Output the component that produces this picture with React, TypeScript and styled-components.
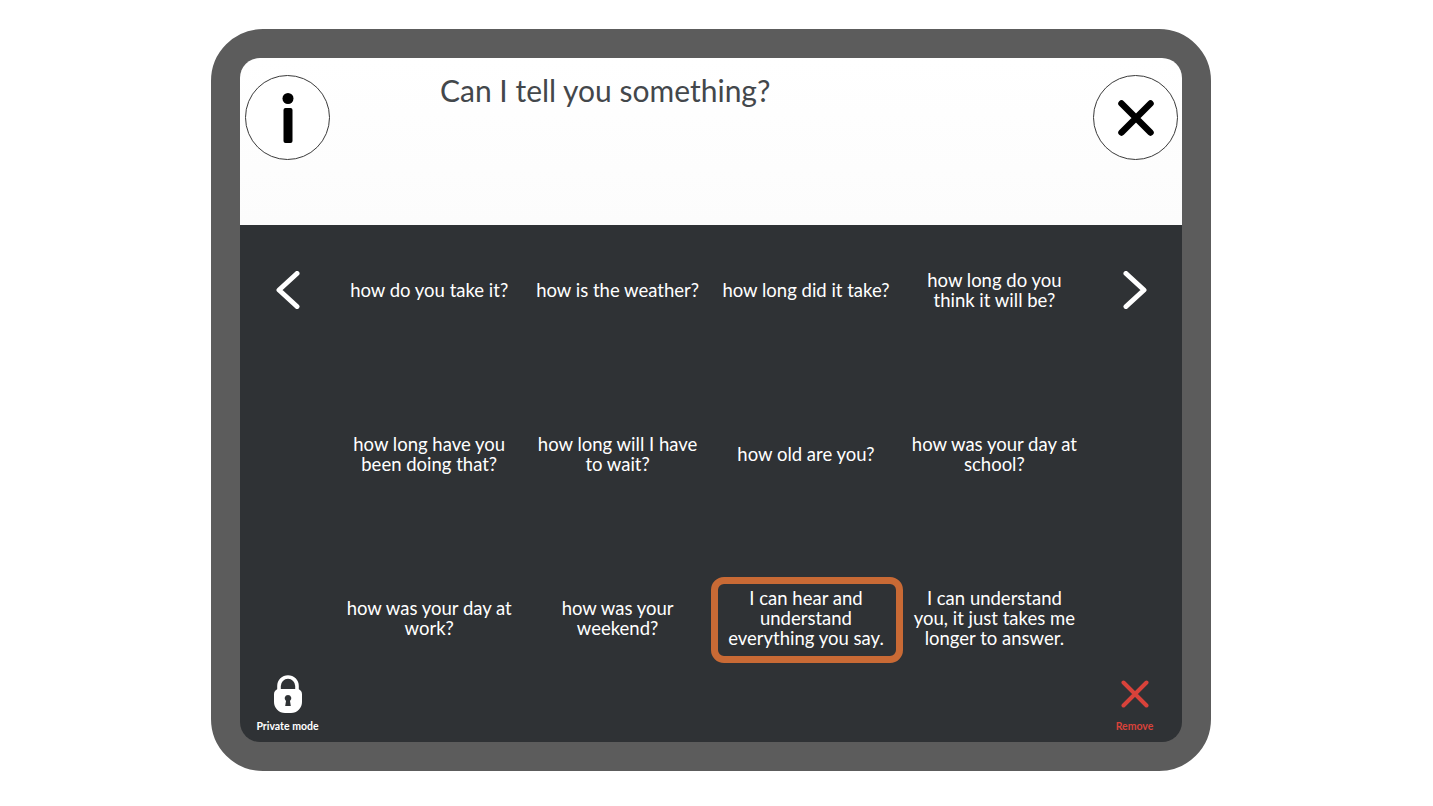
import styled, { createGlobalStyle } from 'styled-components';

const GlobalStyle = createGlobalStyle`
  html, body {
    margin: 0;
    padding: 0;
    background: #ffffff;
  }
`;

const Page = styled.div`
  width: 1433px;
  height: 806px;
  padding-top: 29px;
  padding-left: 211px;
  box-sizing: border-box;
  font-family: Lato, 'Noto Sans', sans-serif;
`;

const Frame = styled.div`
  width: 1000px;
  height: 742px;
  box-sizing: border-box;
  border: 29px solid #5c5c5c;
  border-radius: 52px;
  background: #5c5c5c;
`;

const Screen = styled.div`
  height: 100%;
  border-radius: 20px;
  overflow: hidden;
  display: flex;
  flex-direction: column;
`;

const Header = styled.header`
  height: 167px;
  box-sizing: border-box;
  padding: 17px 4px 0 5px;
  display: flex;
  align-items: flex-start;
  background: linear-gradient(#ffffff, #fcfcfc);
`;

const Title = styled.h1`
  flex: 1;
  margin: 0 0 0 110px;
  font-size: 30px;
  font-weight: 400;
  line-height: 30px;
  color: #43474b;
`;

const RoundButton = styled.button`
  width: 85px;
  height: 85px;
  padding: 0;
  border: 1.5px solid #3a3a3a;
  border-radius: 50%;
  background: #ffffff;
  display: flex;
  align-items: center;
  justify-content: center;
`;

const Panel = styled.main`
  flex: 1;
  background: #2f3235;
  display: flex;
  flex-direction: column;
`;

const Grid = styled.div`
  padding-top: 22px;
  display: grid;
  grid-template-columns: 95px repeat(4, 188.4px) 1fr;
  grid-auto-rows: 86px;
  row-gap: 78px;
`;

const Arrow = styled.button`
  padding: 0;
  border: 0;
  background: none;
  display: flex;
  align-items: center;
  justify-content: center;
`;

const Phrase = styled.div<{ $start: number; $selected?: boolean }>`
  grid-column: ${(p) => p.$start} / span 1;
  position: relative;
  display: flex;
  align-items: center;
  justify-content: center;
  text-align: center;
  padding: 0 10px;
  font-size: 18.5px;
  line-height: 20px;
  color: #ffffff;
  white-space: pre-line;
`;

const SelectedMark = styled.span`
  position: absolute;
  left: -1px;
  right: -3px;
  top: 2px;
  bottom: -2px;
  border: 7px solid #c96a35;
  border-radius: 13px;
`;

const Footer = styled.footer`
  margin-top: 14px;
  display: flex;
  justify-content: space-between;
`;

const FooterAction = styled.button<{ $danger?: boolean }>`
  width: 95px;
  padding: 0;
  border: 0;
  background: none;
  display: flex;
  flex-direction: column;
  align-items: center;
  gap: 6px;
  font-family: inherit;
  font-size: 10.5px;
  line-height: 14px;
  font-weight: 700;
  color: ${(p) => (p.$danger ? '#d8423a' : '#ffffff')};
`;

const IconSlot = styled.span`
  height: 38px;
  display: flex;
  align-items: center;
  justify-content: center;
`;

const rows = [
  ['how do you take it?', 'how is the weather?', 'how long did it take?', 'how long do you\nthink it will be?'],
  ['how long have you\nbeen doing that?', 'how long will I have\nto wait?', 'how old are you?', 'how was your day at\nschool?'],
  ['how was your day at\nwork?', 'how was your\nweekend?', 'I can hear and\nunderstand\neverything you say.', 'I can understand\nyou, it just takes me\nlonger to answer.'],
];

const InfoIcon = () => (
  <svg width="12" height="50" viewBox="0 0 12 50">
    <circle cx="6" cy="5.5" r="5.5" fill="#000" />
    <rect x="1.5" y="15" width="9" height="35" rx="2" fill="#000" />
  </svg>
);

const CloseIcon = () => (
  <svg width="36" height="36" viewBox="0 0 36 36">
    <path d="M3.5 3.5 L32.5 32.5 M32.5 3.5 L3.5 32.5" stroke="#000" strokeWidth="6.5" strokeLinecap="round" />
  </svg>
);

const Chevron = ({ left }: { left?: boolean }) => (
  <svg width="24" height="38" viewBox="0 0 24 38">
    <path
      d={left ? 'M21 2.5 L3 19 L21 35.5' : 'M3 2.5 L21 19 L3 35.5'}
      fill="none"
      stroke="#fff"
      strokeWidth="5"
      strokeLinecap="round"
      strokeLinejoin="round"
    />
  </svg>
);

const LockIcon = () => (
  <svg width="28" height="38" viewBox="0 0 28 38">
    <path d="M5 16 V11 a9 9 0 0 1 18 0 V16" fill="none" stroke="#fff" strokeWidth="3.6" />
    <path
      fillRule="evenodd"
      fill="#fff"
      d="M5 14 H23 a5 5 0 0 1 5 5 V27 a11 11 0 0 1 -11 11 H11 a11 11 0 0 1 -11 -11 V19 a5 5 0 0 1 5 -5 Z M14 20 a3.4 3.4 0 0 0 -2 6.1 L11.2 31 H16.8 L16 26.1 A3.4 3.4 0 0 0 14 20 Z"
    />
  </svg>
);

const RemoveIcon = () => (
  <svg width="28" height="28" viewBox="0 0 28 28">
    <path d="M2.5 2.5 L25.5 25.5 M25.5 2.5 L2.5 25.5" stroke="#d8423a" strokeWidth="4" strokeLinecap="round" />
  </svg>
);

export default function App() {
  return (
    <Page>
      <GlobalStyle />
      <Frame>
        <Screen>
          <Header>
            <RoundButton>
              <InfoIcon />
            </RoundButton>
            <Title>Can I tell you something?</Title>
            <RoundButton>
              <CloseIcon />
            </RoundButton>
          </Header>
          <Panel>
            <Grid>
              {rows.map((row, r) => (
                <>
                  {r === 0 && (
                    <Arrow style={{ gridColumn: 1, gridRow: 1 }}>
                      <Chevron left />
                    </Arrow>
                  )}
                  {row.map((text, c) => (
                    <Phrase key={text} $start={c + 2} style={{ gridRow: r + 1 }}>
                      {r === 2 && c === 2 && <SelectedMark />}
                      {text}
                    </Phrase>
                  ))}
                  {r === 0 && (
                    <Arrow style={{ gridColumn: 6, gridRow: 1 }}>
                      <Chevron />
                    </Arrow>
                  )}
                </>
              ))}
            </Grid>
            <Footer>
              <FooterAction>
                <IconSlot>
                  <LockIcon />
                </IconSlot>
                Private mode
              </FooterAction>
              <FooterAction $danger>
                <IconSlot>
                  <RemoveIcon />
                </IconSlot>
                Remove
              </FooterAction>
            </Footer>
          </Panel>
        </Screen>
      </Frame>
    </Page>
  );
}
